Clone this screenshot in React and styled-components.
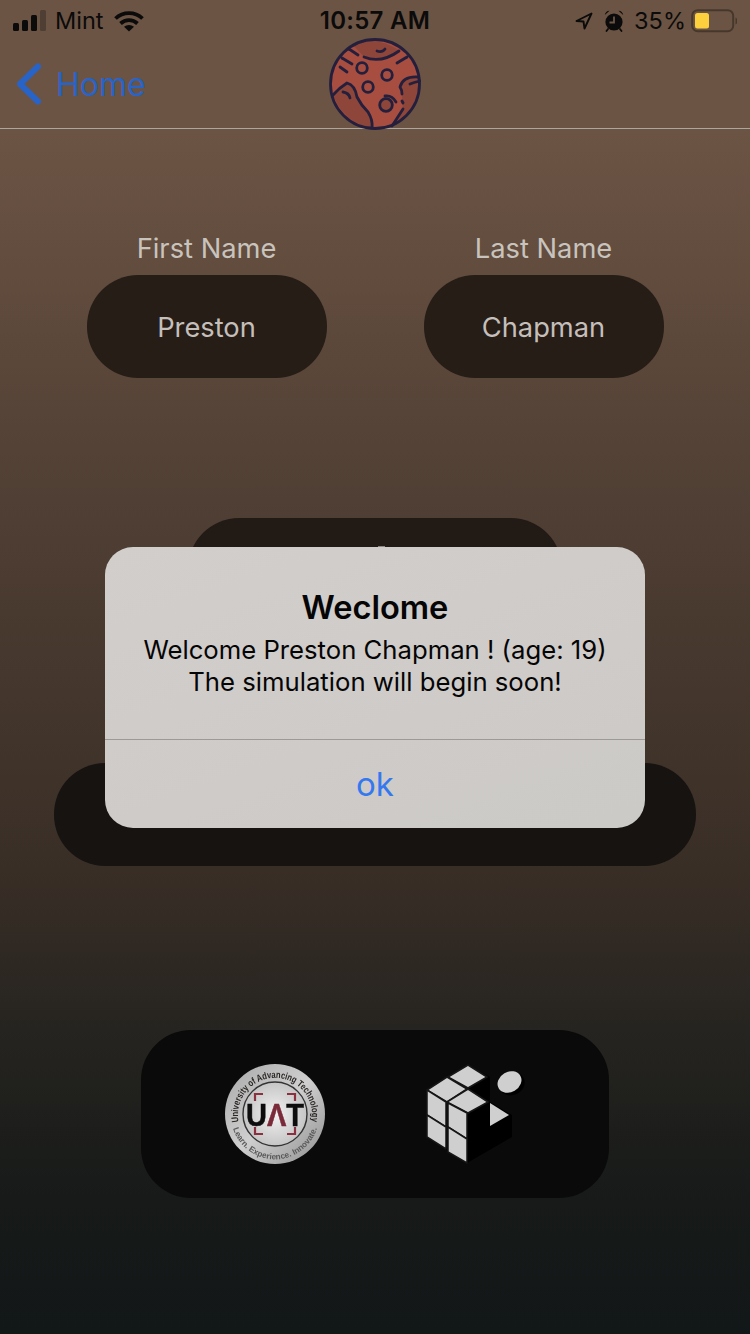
import React from 'react';
import styled, { createGlobalStyle } from 'styled-components';

const GlobalStyle = createGlobalStyle`
  html, body { margin: 0; padding: 0; width: 750px; height: 1334px; overflow: hidden; }
  body { font-family: Inter, "Liberation Sans", sans-serif; }
`;

const Screen = styled.div`
  position: relative;
  width: 750px;
  height: 1334px;
  overflow: hidden;
  display: flex;
  flex-direction: column;
  background: linear-gradient(180deg, #6c5444 0, #6c5444 130px, #503f34 500px, #392e26 870px, #262420 1030px, #171a19 1200px, #121717 1334px);
`;

const StatusBar = styled.div`
  height: 40px;
  box-sizing: border-box;
  padding-top: 1px;
  display: grid;
  grid-template-columns: 1fr auto 1fr;
  align-items: center;
  color: #0b0b0b;
  font-size: 23.5px;
`;

const StatusLeft = styled.div`
  display: flex;
  align-items: center;
  padding-left: 13px;
  gap: 8px;
`;

const CarrierName = styled.span`
  margin-right: 2px;
`;

const StatusRight = styled.div`
  display: flex;
  align-items: center;
  justify-content: flex-end;
  padding-right: 13px;
`;

const Clock = styled.div`
  font-weight: 600;
  font-size: 24px;
  letter-spacing: 0.3px;
`;

const Percent = styled.span`
  margin: 0 5px 0 10px;
`;

const AlarmSvg = styled.svg`
  margin-left: 11px;
`;

const NavBar = styled.div`
  height: 88px;
  position: relative;
  display: flex;
  align-items: center;
  border-bottom: 1px solid #aca6a0;
`;

const BackLink = styled.div`
  display: flex;
  align-items: center;
  gap: 14px;
  padding-left: 16px;
  color: #2863c8;
  font-size: 32px;
`;

const PlanetSlot = styled.div`
  position: absolute;
  left: 329px;
  top: -2px;
  line-height: 0;
`;

const NameRow = styled.div`
  display: flex;
  justify-content: center;
  gap: 97px;
  margin-top: 104px;
`;

const Field = styled.div`
  display: flex;
  flex-direction: column;
  align-items: center;
  gap: 10px;
`;

const FieldLabel = styled.div`
  color: #c9c3bd;
  font-size: 27.3px;
  line-height: 32px;
`;

const Pill = styled.div`
  background: ${p => p.$bg};
  width: ${p => p.$w}px;
  height: 103px;
  border-radius: 51px;
  box-sizing: border-box;
  padding-top: 1px;
  display: flex;
  align-items: center;
  justify-content: center;
  color: #c4bfba;
  font-size: 27.3px;
  align-self: center;
  flex: none;
`;

const AgePill = styled(Pill)`
  position: relative;
  margin-top: 140px;

  &::after {
    content: '';
    position: absolute;
    left: 190px;
    top: 28px;
    width: 7px;
    height: 1px;
    background: #8d8883;
  }
`;

const SubmitPill = styled(Pill)`
  margin-top: 142px;
`;

const LogoBar = styled.div`
  margin-top: 164px;
  align-self: center;
  width: 468px;
  height: 168px;
  box-sizing: border-box;
  padding-left: 84px;
  border-radius: 50px;
  background: #0a0a0a;
  display: flex;
  align-items: center;
  gap: 101px;
`;

const SoftSvg = styled.svg`
  filter: blur(0.35px);
  overflow: visible;
`;

const AlertBox = styled.div`
  position: absolute;
  left: 105px;
  top: 547px;
  width: 540px;
  height: 281px;
  border-radius: 28px;
  background: linear-gradient(160deg, #d2cecb 0%, #cfcbc8 60%, #cbcac6 100%);
  display: flex;
  flex-direction: column;
`;

const AlertBody = styled.div`
  height: 193px;
  box-sizing: border-box;
  padding-top: 38px;
  text-align: center;
  color: #050505;
  border-bottom: 1px solid #9c9996;
`;

const AlertTitle = styled.div`
  font-size: 32.6px;
  line-height: 44px;
  font-weight: 600;
`;

const AlertText = styled.div`
  font-size: 25.7px;
  line-height: 32px;
  margin-top: 5px;
`;

const AlertButton = styled.div`
  flex: 1;
  display: flex;
  align-items: center;
  justify-content: center;
  color: #3478f0;
  font-size: 33px;
`;

const SignalIcon = () => (
  <svg width="34" height="22" viewBox="0 0 34 22">
    <rect x="0" y="13" width="6" height="8" rx="1.5" fill="#0b0b0b" />
    <rect x="9" y="10" width="6" height="11" rx="1.5" fill="#0b0b0b" />
    <rect x="18" y="5" width="6" height="16" rx="1.5" fill="#0b0b0b" />
    <rect x="27" y="0" width="6" height="21" rx="1.5" fill="#4f3e33" />
  </svg>
);

const WifiIcon = () => (
  <svg width="30" height="23" viewBox="0 0 30 23">
    <path d="M1.5 9.5 A19.5 19.5 0 0 1 28.5 9.5" fill="none" stroke="#0b0b0b" strokeWidth="3.8" />
    <path d="M6.5 14.5 A12.5 12.5 0 0 1 23.5 14.5" fill="none" stroke="#0b0b0b" strokeWidth="3.8" />
    <path d="M15 22.5 L10 17.8 A7.5 7.5 0 0 1 20 17.8 Z" fill="#0b0b0b" />
  </svg>
);

const LocationIcon = () => (
  <svg width="18" height="18" viewBox="0 0 18 18">
    <path d="M16.5 1.5 L1.5 9 L8.5 9.5 L9.5 16.5 Z" fill="none" stroke="#0b0b0b" strokeWidth="1.9" strokeLinejoin="round" />
  </svg>
);

const AlarmIcon = () => (
  <AlarmSvg width="20" height="22" viewBox="0 0 20 22">
    <circle cx="10" cy="12" r="8.6" fill="#0b0b0b" />
    <path d="M10 6.5 V12.5 H5.5" fill="none" stroke="#6c5444" strokeWidth="1.8" />
    <path d="M0.8 5 A4.5 4.5 0 0 1 5.5 0.8 Z M19.2 5 A4.5 4.5 0 0 0 14.5 0.8 Z" fill="#0b0b0b" />
    <path d="M4 19 L2.5 21 M16 19 L17.5 21" stroke="#0b0b0b" strokeWidth="1.8" strokeLinecap="round" />
  </AlarmSvg>
);

const BatteryIcon = () => (
  <svg width="46" height="24" viewBox="0 0 46 24">
    <rect x="1.2" y="1.2" width="41" height="21" rx="5.5" fill="none" stroke="#46372c" strokeWidth="2" />
    <rect x="4" y="4" width="14" height="15.5" rx="2.5" fill="#fdd13e" />
    <path d="M44.5 8.5 A4 4 0 0 1 44.5 15.5 Z" fill="#46372c" />
  </svg>
);

const BackChevron = () => (
  <svg width="26" height="42" viewBox="0 0 26 42">
    <path d="M22 3.5 L4 21 L22 38.5" fill="none" stroke="#2863c8" strokeWidth="6" strokeLinecap="round" strokeLinejoin="round" />
  </svg>
);

const PlanetLogo = () => (
  <svg width="92" height="92" viewBox="0 0 92 92">
    <circle cx="46" cy="46" r="44.5" fill="#a84e40" />
    <path d="M4 57 Q10 50 18 45 Q26 47 28 59 Q32 67 39 74 Q44 82 43 90 Q14 84 4 57 Z" fill="#8d4639" />
    <path d="M24 7 Q46 -3 70 12 Q52 25 35 19 Z" fill="#8d4639" />
    <path d="M89 39 Q74 38 71 49 Q74 55 73 64 L74 71 L63 88 Q85 80 90 50 Z" fill="#8d4639" />
    <circle cx="58" cy="66" r="6.5" fill="#8d4639" />
    <g fill="none" stroke="#241f3c" strokeWidth="2.8" strokeLinecap="round" strokeLinejoin="round">
      <circle cx="46" cy="46" r="44.5" />
      <path d="M20 11 L29 17" />
      <path d="M13 20 L23 26" />
      <path d="M11 29 L18 34" />
      <path d="M35 19 Q52 26 70 13" />
      <path d="M68 25 L78 19" />
      <path d="M48 13 Q53 15 56 11" />
      <circle cx="33" cy="30" r="5.3" />
      <circle cx="58" cy="37" r="5.3" />
      <circle cx="39" cy="49" r="5.3" />
      <circle cx="57" cy="67" r="6.3" />
      <path d="M56 58 Q63 57 67 64" />
      <path d="M4 57 Q10 50 18 45 Q26 47 28 59 Q32 67 39 74 Q44 82 43 90" />
      <path d="M14 54 Q20 55 21 60" />
      <path d="M89 39 Q74 38 71 49 Q73 52 73 56" />
      <path d="M81 46 Q86 44 91 43" />
      <path d="M73 63 L74 65" />
      <path d="M74 71 L63 88" />
    </g>
  </svg>
);

const UatLogo = () => (
  <SoftSvg width="100" height="100" viewBox="0 0 100 100">
    <defs>
      <linearGradient id="uatRim" x1="0" y1="0" x2="1" y2="1">
        <stop offset="0" stopColor="#a8a8a8" />
        <stop offset="0.5" stopColor="#cfcfcf" />
        <stop offset="1" stopColor="#8f8f8f" />
      </linearGradient>
      <radialGradient id="uatFace" cx="0.5" cy="0.5" r="0.6">
        <stop offset="0" stopColor="#f2f2f2" />
        <stop offset="1" stopColor="#bcbcbc" />
      </radialGradient>
      <path id="uatTop" d="M 13.7 58 A 37 37 0 1 1 86.3 58" />
      <path id="uatBottom" d="M 7 42 A 44 44 0 1 0 93 42" />
    </defs>
    <circle cx="50" cy="50" r="50" fill="url(#uatRim)" />
    <circle cx="50" cy="50" r="32" fill="url(#uatFace)" stroke="#333" strokeWidth="1.4" />
    <text fontSize="9.6" fontWeight="700" fill="#2b2624" fontFamily="Liberation Sans, sans-serif" textLength="130" lengthAdjust="spacingAndGlyphs">
      <textPath href="#uatTop">University of Advancing Technology</textPath>
    </text>
    <text fontSize="8.2" fontWeight="700" fill="#5a5a5a" fontFamily="Liberation Sans, sans-serif">
      <textPath href="#uatBottom" startOffset="50%" textAnchor="middle">Learn. Experience. Innovate.</textPath>
    </text>
    <path d="M30 37 V30 H38 M70 37 V30 H62 M30 63 V70 H38 M70 63 V70 H62" fill="none" stroke="#8a3040" strokeWidth="2.2" />
    <text x="50" y="62" textAnchor="middle" fontSize="32" fontWeight="700" fill="#0d0d0d" stroke="#0d0d0d" strokeWidth="0.5" fontFamily="Liberation Sans, sans-serif" textLength="58" lengthAdjust="spacingAndGlyphs">U<tspan fill="#7b2a3a" stroke="#7b2a3a">Λ</tspan>T</text>
  </SoftSvg>
);

// coordinates are taken so that (0,0) is the svg's top-left, 426/1064 on the page
const CubeLogo = () => (
  <SoftSvg width="100" height="100" viewBox="0 0 100 100">
    <path d="M42 1 L64 13 L64 38 L86 51 L86 73 L41 99 L1 74 L1 26 Z" fill="#000" />
    <ellipse cx="86" cy="20" rx="13" ry="11" transform="rotate(-25 86 20)" fill="#000" />
    <ellipse cx="83.5" cy="18" rx="12.5" ry="10.2" transform="rotate(-30 83.5 18)" fill="#cfcfcf" />
    <g fill="#cfcfcf" stroke="#161616" strokeWidth="1.5" strokeLinejoin="round">
      <path d="M42 1 L61 13 L42 24 L22 13 Z" />
      <path d="M1 26 L21 13 L41 25 L21 38 Z" />
      <path d="M21 38 L42 25 L62 38 L42 49 Z" />
      <path d="M1 26 L20 38 L20 63 L1 51 Z" />
      <path d="M1 51 L20 63 L20 85 L1 73 Z" />
      <path d="M22 39 L41 49 L41 75 L22 63 Z" />
      <path d="M22 63 L41 75 L41 99 L22 88 Z" />
    </g>
    <path d="M64 39 L83 51 L64 62 Z" fill="#cfcfcf" />
  </SoftSvg>
);

export default function App() {
  return (
    <Screen>
      <GlobalStyle />
      <StatusBar>
        <StatusLeft>
          <SignalIcon />
          <CarrierName>Mint</CarrierName>
          <WifiIcon />
        </StatusLeft>
        <Clock>10:57 AM</Clock>
        <StatusRight>
          <LocationIcon />
          <AlarmIcon />
          <Percent>35%</Percent>
          <BatteryIcon />
        </StatusRight>
      </StatusBar>
      <NavBar>
        <BackLink>
          <BackChevron />
          <span>Home</span>
        </BackLink>
        <PlanetSlot>
          <PlanetLogo />
        </PlanetSlot>
      </NavBar>
      <NameRow>
        <Field>
          <FieldLabel>First Name</FieldLabel>
          <Pill $bg="#261d17" $w={240}>Preston</Pill>
        </Field>
        <Field>
          <FieldLabel>Last Name</FieldLabel>
          <Pill $bg="#261d17" $w={240}>Chapman</Pill>
        </Field>
      </NameRow>
      <AgePill $bg="#211a15" $w={374} />
      <SubmitPill $bg="#161310" $w={642} />
      <LogoBar>
        <UatLogo />
        <CubeLogo />
      </LogoBar>
      <AlertBox>
        <AlertBody>
          <AlertTitle>Weclome</AlertTitle>
          <AlertText>
            Welcome Preston Chapman ! (age: 19)
            <br />
            The simulation will begin soon!
          </AlertText>
        </AlertBody>
        <AlertButton>ok</AlertButton>
      </AlertBox>
    </Screen>
  );
}
